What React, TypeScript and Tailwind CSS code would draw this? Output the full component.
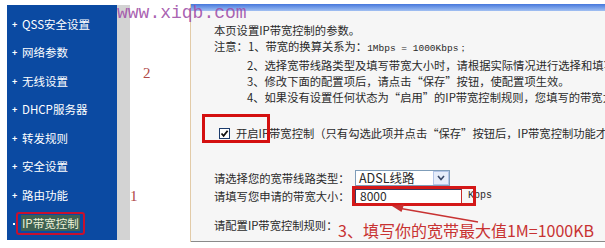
import React from 'react';

const menu = ['QSS安全设置', '网络参数', '无线设置', 'DHCP服务器', '转发规则', '安全设置', '路由功能'];

const notes = [
  '2、选择宽带线路类型及填写带宽大小时，请根据实际情况进行选择和填写。',
  '3、修改下面的配置项后，请点击“保存”按钮，使配置项生效。',
  '4、如果没有设置任何状态为“启用”的IP带宽控制规则，您填写的带宽大小将不起作用。',
];

const App = () => {
  return (
    <div className="relative w-[605px] h-[248px] bg-white overflow-hidden flex pt-[4px] font-['Noto_Sans_CJK_SC',sans-serif]">
      {/* left menu */}
      <div className="ml-[7px] mt-[1px] w-[110px] h-[235px] bg-[#0b4aa2] pt-[5px] flex flex-col text-white text-[11.5px]">
        {menu.map((item) => (
          <div key={item} className="h-[28.5px] flex items-center pl-[5px] whitespace-nowrap">
            <span className="w-[10px] text-[9px] font-bold leading-none">+</span>
            <span>{item}</span>
          </div>
        ))}
        <div className="h-[28.5px] flex items-center pl-[6px]">
          <span className="w-[2px] h-[2px] bg-white mr-[1px]" />
          <span className="border-[2px] border-[#c8102e] rounded-[3px] px-[3px] py-px">
            <span className="bg-[#3f6152] text-[#eef2d8] px-px">IP带宽控制</span>
          </span>
        </div>
      </div>

      <div className="mt-[1px] w-[13px] h-[235px] bg-[#d3d3d3]" />

      {/* white gap with step numbers */}
      <div className="w-[60px] flex flex-col font-['Liberation_Serif',serif] text-[15px] text-[#b04848] leading-none">
        <span className="mt-[62px] ml-[13px]">2</span>
        <span className="mt-[108px] ml-0">1</span>
      </div>

      <div className="w-px h-[238px] bg-[#e2cba8]" />

      {/* content panel */}
      <div className="flex-1 h-[238px] bg-[#f6f6f6] border-b border-[#8a8a8a] flex flex-col overflow-hidden text-[11.3px] text-[#2a2a2a] whitespace-nowrap">
        <div className="h-[7px] bg-gradient-to-b from-[#4677dc] to-[#a2c0f2]" />
        <div className="pl-[23px] pt-[11px] leading-[16px]">
          <div>本页设置IP带宽控制的参数。</div>
          <div>
            注意：1、带宽的换算关系为：
            <span className="font-['Liberation_Mono',monospace] text-[9.5px]">1Mbps = 1000Kbps；</span>
          </div>
          {notes.map((n) => (
            <div key={n} className="pl-[33px]">
              {n}
            </div>
          ))}

          <div className="mt-[20px] flex items-center ml-[5px]">
            <span className="w-[11px] h-[11px] border border-[#1c3c6c] bg-white flex items-center justify-center mr-[6px]">
              <svg width="9" height="9" viewBox="0 0 9 9">
                <path d="M1.5 4.5 L3.6 6.8 L7.6 1.8" stroke="#111" strokeWidth="1.8" fill="none" />
              </svg>
            </span>
            <span>开启IP带宽控制（只有勾选此项并点击“保存”按钮后，IP带宽控制功能才能生效）</span>
          </div>

          <div className="mt-[29px] flex items-center h-[16px]">
            <span className="w-[141px]">请选择您的宽带线路类型：</span>
            <div className="w-[95px] h-[16px] border border-[#7f9db9] bg-white flex items-center">
              <span className="flex-1 pl-[3px] text-[12.5px] leading-none">ADSL线路</span>
              <span className="w-[16px] h-[14px] border border-[#b4c6e8] bg-[#e6edfa] flex items-center justify-center">
                <svg width="8" height="6" viewBox="0 0 8 6">
                  <path d="M1 1 L4 4.5 L7 1" stroke="#3a4a6a" strokeWidth="1.6" fill="none" />
                </svg>
              </span>
            </div>
          </div>

          <div className="mt-[1px] flex items-center h-[18px] relative">
            <span className="w-[141px]">请填写您申请的带宽大小：</span>
            <div className="w-[107px] h-[15px] border border-[#3a3a5e] border-r-[#c62a2a] bg-white flex items-center pl-[4px] text-[12px] leading-none">
              8000
            </div>
            <span className="ml-[6px] font-['Liberation_Mono',monospace] text-[10px]">Kbps</span>
            <div className="absolute left-[138px] top-[-1px] w-[124px] h-[20px] border-[3px] border-[#d41818]" />
          </div>

          <div className="mt-[12px] flex items-start">
            <span className="w-[124px] leading-[16px]">请配置IP带宽控制规则：</span>
            <span className="pt-[3px] text-[16px] leading-[20px] text-[#c83232]">3、填写你的宽带最大值1M=1000KB</span>
          </div>
        </div>
      </div>

      {/* overlays */}
      <div className="absolute left-[117px] top-[4px] font-['Liberation_Mono',monospace] text-[18px] leading-[18px] text-[#a04fa8]/90">
        www.xiqb.com
      </div>
      <div className="absolute left-[202px] top-[114px] w-[68px] h-[29px] border-[3px] border-[#d41010]" />
      <svg className="absolute left-[388px] top-[200px]" width="96" height="26" viewBox="0 0 96 26">
        <path d="M10 8 L90 22" stroke="#c83232" strokeWidth="1.4" />
        <path d="M4 6 L16 4.5 L13.5 12 Z" fill="#c83232" />
      </svg>
    </div>
  );
};

export default App;
